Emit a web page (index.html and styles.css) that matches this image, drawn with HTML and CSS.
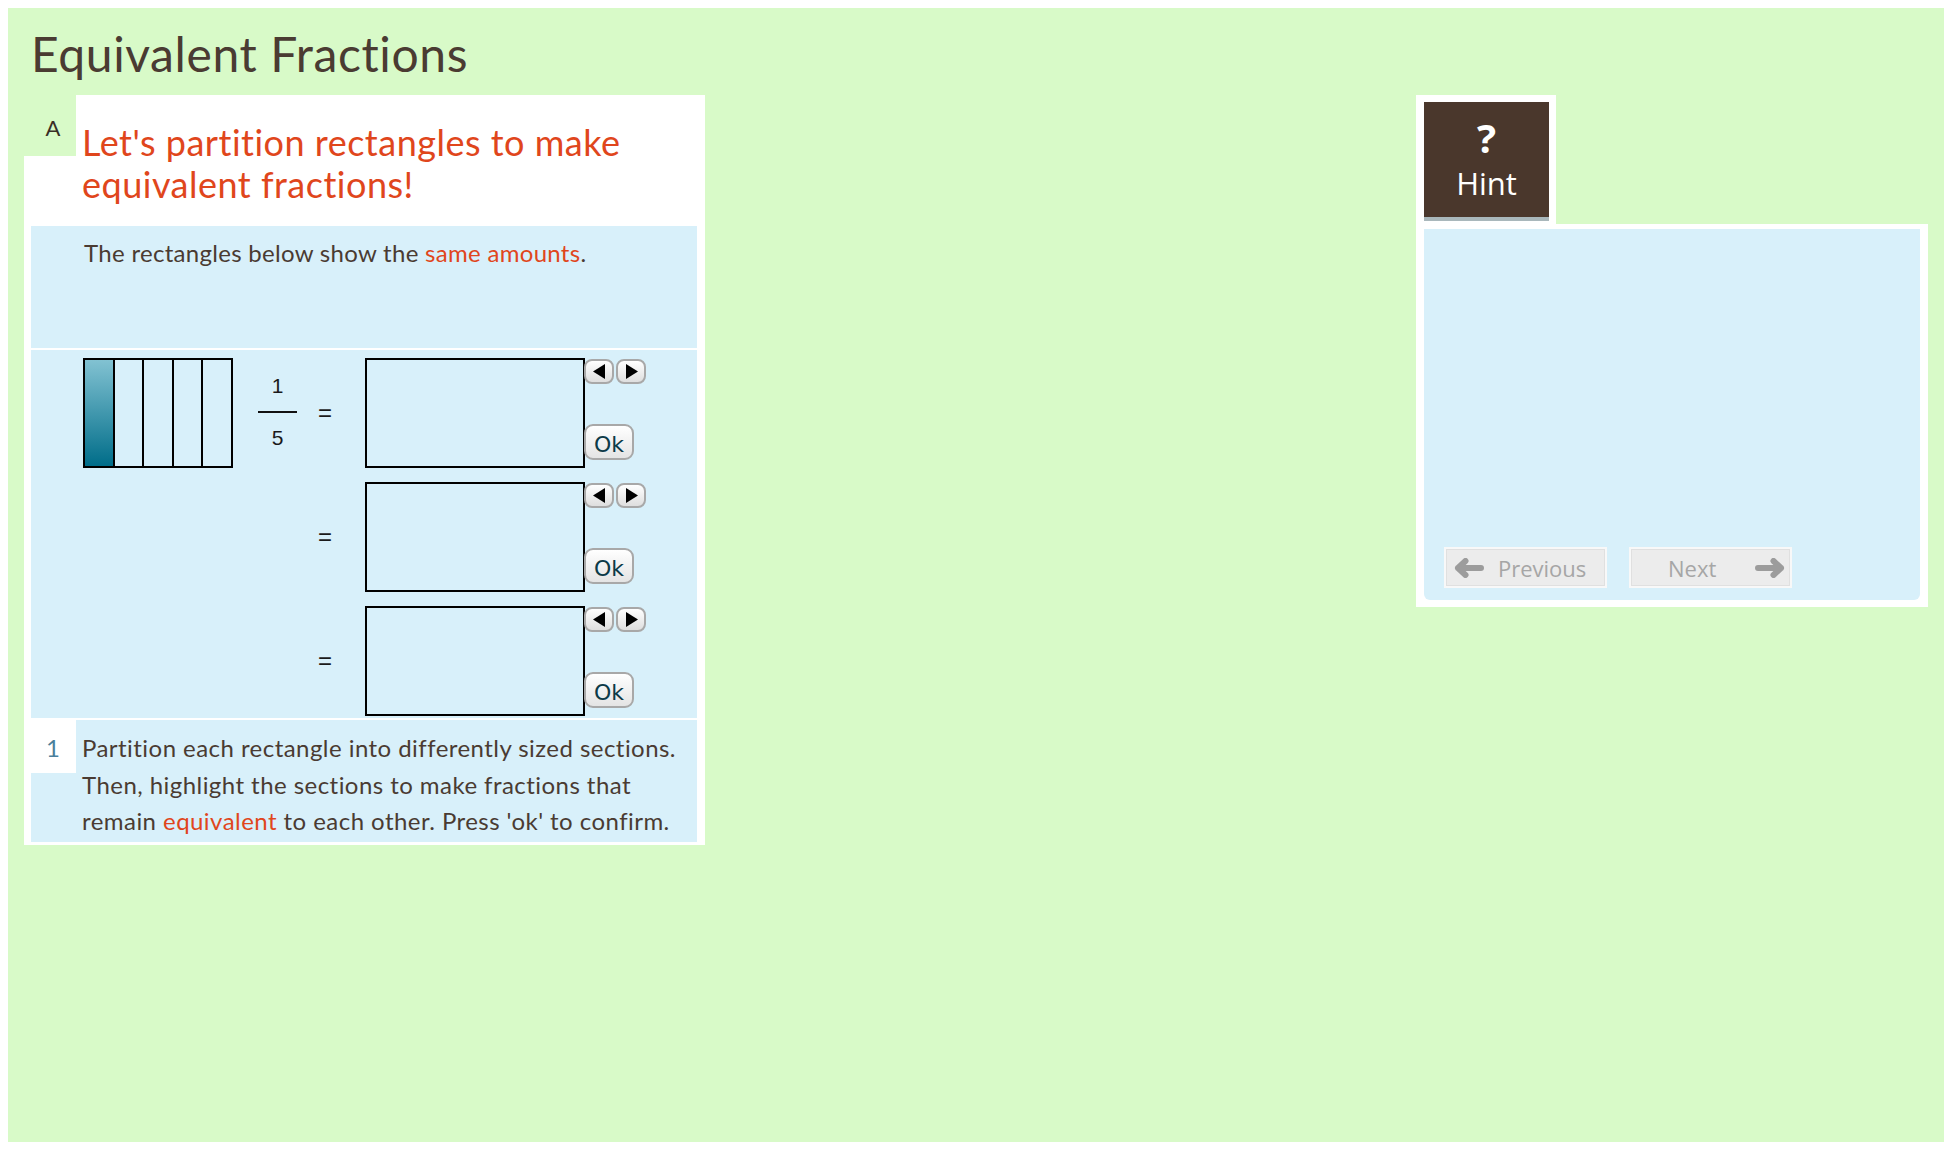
FILE: index.html
```html
<!DOCTYPE html>
<html lang="en">
<head>
<meta charset="utf-8">
<title>Equivalent Fractions</title>
<link rel="stylesheet" href="styles.css">
</head>
<body>
<div class="page">
  <h1 class="title">Equivalent Fractions</h1>
  <div class="content">
    <section class="card">
      <div class="card-head">
        <div class="step-label">A</div>
        <h2 class="heading">Let's partition rectangles to make<br>equivalent fractions!</h2>
      </div>
      <div class="statement">The rectangles below show the <span class="hl">same amounts</span>.</div>
      <div class="workspace">
        <div class="row">
          <div class="rect-slot">
            <div class="bar-model">
              <div class="cell filled"></div>
              <div class="cell"></div>
              <div class="cell"></div>
              <div class="cell"></div>
              <div class="cell"></div>
            </div>
          </div>
          <div class="frac">
            <span class="num">1</span>
            <span class="frac-bar"></span>
            <span class="den">5</span>
          </div>
          <div class="eq">=</div>
          <div class="draw-box"></div>
          <div class="controls">
            <div class="arrows">
              <button class="arrow-btn"><svg width="13" height="15" viewBox="0 0 13 15"><polygon points="12,0 12,15 0,7.5" fill="#000"/></svg></button>
              <button class="arrow-btn"><svg width="13" height="15" viewBox="0 0 13 15"><polygon points="1,0 1,15 13,7.5" fill="#000"/></svg></button>
            </div>
            <button class="ok-btn">Ok</button>
          </div>
        </div>
        <div class="row">
          <div class="rect-slot"></div>
          <div class="frac empty"></div>
          <div class="eq">=</div>
          <div class="draw-box"></div>
          <div class="controls">
            <div class="arrows">
              <button class="arrow-btn"><svg width="13" height="15" viewBox="0 0 13 15"><polygon points="12,0 12,15 0,7.5" fill="#000"/></svg></button>
              <button class="arrow-btn"><svg width="13" height="15" viewBox="0 0 13 15"><polygon points="1,0 1,15 13,7.5" fill="#000"/></svg></button>
            </div>
            <button class="ok-btn">Ok</button>
          </div>
        </div>
        <div class="row">
          <div class="rect-slot"></div>
          <div class="frac empty"></div>
          <div class="eq">=</div>
          <div class="draw-box"></div>
          <div class="controls">
            <div class="arrows">
              <button class="arrow-btn"><svg width="13" height="15" viewBox="0 0 13 15"><polygon points="12,0 12,15 0,7.5" fill="#000"/></svg></button>
              <button class="arrow-btn"><svg width="13" height="15" viewBox="0 0 13 15"><polygon points="1,0 1,15 13,7.5" fill="#000"/></svg></button>
            </div>
            <button class="ok-btn">Ok</button>
          </div>
        </div>
      </div>
      <div class="instruction">
        <div class="step-num">1</div>
        <p class="instr-text">Partition each rectangle into differently sized sections.<br>Then, highlight the sections to make fractions that<br>remain <span class="hl">equivalent</span> to each other. Press 'ok' to confirm.</p>
      </div>
    </section>

    <aside class="hint-area">
      <div class="hint-tab">
        <button class="hint-btn"><span class="q">?</span><span class="hint-label">Hint</span></button>
      </div>
      <div class="hint-panel">
        <div class="hint-body">
          <div class="nav">
            <button class="nav-btn prev">
              <svg width="30" height="20" viewBox="0 0 30 20"><path d="M11.5 3 L4 10 L11.5 17 M4 10 H27" fill="none" stroke="#9c9c9c" stroke-width="6" stroke-linecap="round" stroke-linejoin="round"/></svg>
              <span>Previous</span>
            </button>
            <button class="nav-btn next">
              <span>Next</span>
              <svg width="30" height="20" viewBox="0 0 30 20"><path d="M18.5 3 L26 10 L18.5 17 M26 10 H3" fill="none" stroke="#9c9c9c" stroke-width="6" stroke-linecap="round" stroke-linejoin="round"/></svg>
            </button>
          </div>
        </div>
      </div>
    </aside>
  </div>
</div>
</body>
</html>
```

FILE: styles.css
```css
* { box-sizing: border-box; }

body {
  margin: 8px;
  font-family: Lato, "Open Sans", sans-serif;
  color: #4a3b32;
}

.page {
  background: #d8fac8;
  height: 1134px;
  overflow: hidden;
}

.title {
  margin: 0;
  padding: 18px 0 0 23px;
  font-size: 48px;
  line-height: 56px;
  font-weight: 400;
  letter-spacing: 0.6px;
  color: #4a3b32;
}

.content {
  display: flex;
  justify-content: space-between;
  align-items: flex-start;
  padding: 13px 16px 0 16px;
}

/* ---------- left card ---------- */
.card {
  width: 681px;
  background: #ffffff;
  padding-bottom: 3px;
}

.card-head {
  display: flex;
  align-items: flex-start;
  height: 131px;
}

.step-label {
  width: 52px;
  height: 61px;
  flex: none;
  background: #d8fac8;
  text-align: center;
  font-size: 22px;
  line-height: 22px;
  padding: 22px 0 0 6px;
  color: #3a2e26;
}

.heading {
  margin: 0;
  padding: 26px 0 0 6px;
  font-size: 36px;
  line-height: 42px;
  font-weight: 400;
  letter-spacing: 0.5px;
  color: #e0461c;
}

.hl { color: #e0461c; }

.statement {
  margin: 0 8px 0 7px;
  height: 122px;
  background: #d8f0fa;
  padding: 9px 0 0 53px;
  font-size: 24px;
  line-height: 36.67px;
  letter-spacing: 0.3px;
}

.workspace {
  margin: 2px 8px 0 7px;
  height: 368px;
  background: #d8f0fa;
  padding: 8px 0 0 52px;
  display: flex;
  flex-direction: column;
  gap: 14px;
}

.row {
  display: flex;
  align-items: flex-start;
  height: 110px;
}

.rect-slot {
  width: 150px;
  height: 110px;
  margin-right: 25px;
  flex: none;
}

.bar-model {
  display: flex;
  width: 150px;
  height: 110px;
  border: 2px solid #000;
}

.bar-model .cell {
  flex: 1;
  border-left: 2px solid #000;
}

.bar-model .cell:first-child { border-left: none; }

.bar-model .cell.filled {
  background: linear-gradient(#82c2d2, #006d89);
}

.frac {
  width: 39px;
  flex: none;
  margin-top: 16px;
  display: flex;
  flex-direction: column;
  align-items: center;
  font-family: "Liberation Sans", Arial, sans-serif;
  font-size: 21px;
  line-height: 24px;
  color: #1a1a1a;
}

.frac-bar {
  display: block;
  width: 39px;
  height: 2px;
  background: #111;
  margin: 13px 0 13px;
}

.eq {
  width: 56px;
  flex: none;
  align-self: center;
  text-align: center;
  font-family: "Liberation Sans", Arial, sans-serif;
  font-size: 24px;
  line-height: 24px;
  color: #1a1a1a;
  margin-right: 12px;
}

.draw-box {
  width: 220px;
  height: 110px;
  flex: none;
  border: 2px solid #000;
}

.controls {
  width: 63px;
  height: 110px;
  margin-left: -1px;
  padding: 1px 0 8px;
  display: flex;
  flex-direction: column;
  justify-content: space-between;
  align-items: flex-start;
}

.arrows {
  display: flex;
  gap: 2px;
}

.arrow-btn {
  width: 30px;
  height: 25px;
  padding: 0;
  border: 2px solid #a8a8a8;
  border-radius: 8px;
  background: linear-gradient(#ffffff, #dedede);
  display: flex;
  align-items: center;
  justify-content: center;
}

.ok-btn {
  width: 50px;
  height: 36px;
  padding: 6px 0 0 0;
  border: 2px solid #a8a8a8;
  border-radius: 9px;
  background: linear-gradient(#ffffff, #e4e4e4);
  font-family: "DejaVu Sans", Verdana, sans-serif;
  font-size: 22px;
  line-height: 26px;
  color: #0c3a48;
}

.instruction {
  margin: 2px 8px 0 7px;
  height: 122px;
  background: #d8f0fa;
  display: flex;
  align-items: flex-start;
}

.step-num {
  width: 45px;
  height: 53px;
  flex: none;
  background: #ffffff;
  text-align: center;
  font-size: 24px;
  line-height: 36.67px;
  padding: 10px 1px 0 0;
  color: #4a7f9b;
}

.instr-text {
  margin: 0;
  padding: 10px 0 0 6px;
  font-size: 24px;
  line-height: 36.67px;
  letter-spacing: 0.45px;
}

/* ---------- hint area ---------- */
.hint-area {
  width: 512px;
  display: flex;
  flex-direction: column;
  align-items: flex-start;
}

.hint-tab {
  width: 140px;
  background: #ffffff;
  padding: 7px 7px 3px 8px;
}

.hint-btn {
  width: 125px;
  height: 119px;
  border: none;
  border-bottom: 4px solid #a9b7bb;
  background: #4a372c;
  color: #ffffff;
  display: flex;
  flex-direction: column;
  align-items: center;
  padding: 16px 0 0;
  font-family: "Open Sans", sans-serif;
}

.hint-btn .q {
  font-size: 40px;
  line-height: 40px;
  font-weight: 700;
}

.hint-btn .hint-label {
  margin-top: 8px;
  font-size: 31px;
  line-height: 34px;
}

.hint-panel {
  width: 512px;
  background: #ffffff;
  padding: 5px 8px 7px 8px;
}

.hint-body {
  height: 371px;
  background: #d8f0fa;
  border-radius: 0 0 6px 6px;
  display: flex;
  flex-direction: column;
  justify-content: flex-end;
  padding: 0 0 12px 20px;
}

.nav {
  display: flex;
  gap: 22px;
}

.nav-btn {
  width: 163px;
  height: 41px;
  border: 2px solid #f8f8f8;
  box-shadow: inset 0 0 0 1px #e0e0e0;
  background: #ececec;
  display: flex;
  align-items: center;
  font-family: "Open Sans", sans-serif;
  font-size: 22px;
  color: #a6a6a6;
}

.nav-btn.prev {
  padding: 0 0 0 8px;
  gap: 14px;
}

.nav-btn.next {
  padding: 0 5px 0 37px;
  justify-content: space-between;
}
```
